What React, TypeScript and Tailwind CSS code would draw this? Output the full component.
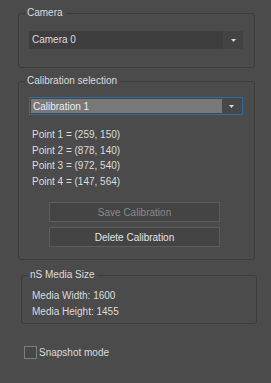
import type { ReactNode } from 'react';

function Arrow() {
  return (
    <svg width="5" height="3" viewBox="0 0 5 3" className="block">
      <path d="M0 0 L5 0 L2.5 3 Z" fill="#d8d8d8" />
    </svg>
  );
}

function Group({ title, className, children }: { title: string; className: string; children: ReactNode }) {
  return (
    <fieldset className={`m-0 p-0 border border-[#3c3c3c] rounded-[3px] ${className}`}>
      <legend className="ml-[6px] pl-[2px] pr-[3px] leading-[12px]">{title}</legend>
      {children}
    </fieldset>
  );
}

export default function App() {
  const points = [
    'Point 1 = (259, 150)',
    'Point 2 = (878, 140)',
    'Point 3 = (972, 540)',
    'Point 4 = (147, 564)',
  ];

  return (
    <div className="w-[271px] h-[383px] bg-[#4b4b4b] pt-[7px] text-[10px] text-[#dcdcdc] font-['Liberation_Sans',Arial,sans-serif]">
      {/* Camera */}
      <Group title="Camera" className="ml-[18px] w-[237px]">
        <div className="pt-[12px] pl-[10px] pr-[11px] pb-[18px]">
          <div className="flex h-[18px] bg-[#3e3e3e]">
            <div className="flex-1 flex items-center pl-[3px] leading-[18px]">Camera 0</div>
            <div className="w-[20px] flex items-center justify-center bg-[#434343]">
              <Arrow />
            </div>
          </div>
        </div>
      </Group>

      {/* Calibration */}
      <Group title="Calibration selection" className="mt-[7px] ml-[18px] w-[237px]">
        <div className="pt-[10px] pl-[10px] pr-[11px] pb-[12px]">
          <div className="flex h-[18px] border border-[#2f6ca3] bg-[#474747] p-px">
            <div className="flex-1 flex items-center pl-[2px] bg-[#787878] text-[#ececec]">Calibration 1</div>
            <div className="w-[19px] flex items-center justify-center">
              <Arrow />
            </div>
          </div>

          <div className="mt-[12px] ml-[3px] leading-[15.5px]">
            {points.map((p) => (
              <div key={p}>{p}</div>
            ))}
          </div>

          <div className="mt-[13px] ml-[20px] w-[171px] flex flex-col gap-[5px]">
            <button className="h-[20px] bg-[#444444] border border-[#5c5c5c] text-[#8a8a8a]">Save Calibration</button>
            <button className="h-[20px] bg-[#444444] border border-[#5c5c5c] text-[#e4e4e4]">Delete Calibration</button>
          </div>
        </div>
      </Group>

      {/* Media size */}
      <Group title="nS Media Size" className="mt-[9px] ml-[21px] w-[236px]">
        <div className="pt-[7px] pl-[10px] pb-[4px] leading-[15.5px]">
          <div>Media Width: 1600</div>
          <div>Media Height: 1455</div>
        </div>
      </Group>

      <label className="mt-[22px] ml-[24px] flex items-center gap-[2px]">
        <span className="w-[13px] h-[13px] border border-[#7c7c7c] bg-[#464646]" />
        <span className="leading-[13px]">Snapshot mode</span>
      </label>
    </div>
  );
}
